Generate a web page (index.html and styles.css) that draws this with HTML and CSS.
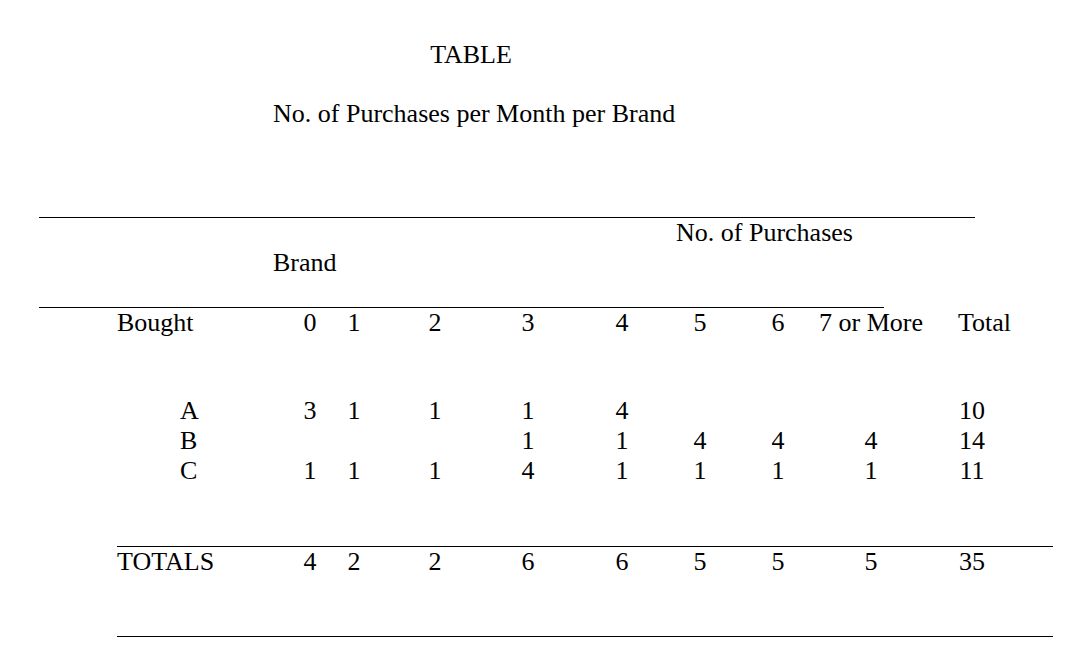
FILE: index.html
```html
<!DOCTYPE html>
<html lang="en">
<head>
<meta charset="utf-8">
<title>TABLE</title>
<link rel="stylesheet" href="styles.css">
</head>
<body>
<div class="page">
  <div class="title">TABLE</div>
  <div class="subtitle">No. of Purchases per Month per Brand</div>

  <div class="rule rule-top"></div>
  <div class="group-head">
    <div class="np">No. of Purchases</div>
    <div class="brand">Brand</div>
  </div>
  <div class="rule rule-mid"></div>

  <div class="row head-row">
    <div class="lbl">Bought</div>
    <div class="c">0</div>
    <div class="c">1</div>
    <div class="c">2</div>
    <div class="c">3</div>
    <div class="c">4</div>
    <div class="c">5</div>
    <div class="c">6</div>
    <div class="c">7 or More</div>
    <div class="c"><span class="total-hd">Total</span></div>
  </div>

  <div class="data">
    <div class="row">
      <div class="lbl brand-lbl">A</div>
      <div class="c">3</div>
      <div class="c">1</div>
      <div class="c">1</div>
      <div class="c">1</div>
      <div class="c">4</div>
      <div class="c"></div>
      <div class="c"></div>
      <div class="c"></div>
      <div class="c">10</div>
    </div>
    <div class="row">
      <div class="lbl brand-lbl">B</div>
      <div class="c"></div>
      <div class="c"></div>
      <div class="c"></div>
      <div class="c">1</div>
      <div class="c">1</div>
      <div class="c">4</div>
      <div class="c">4</div>
      <div class="c">4</div>
      <div class="c">14</div>
    </div>
    <div class="row">
      <div class="lbl brand-lbl">C</div>
      <div class="c">1</div>
      <div class="c">1</div>
      <div class="c">1</div>
      <div class="c">4</div>
      <div class="c">1</div>
      <div class="c">1</div>
      <div class="c">1</div>
      <div class="c">1</div>
      <div class="c">11</div>
    </div>
  </div>

  <div class="rule rule-low"></div>
  <div class="row totals-row">
    <div class="lbl">TOTALS</div>
    <div class="c">4</div>
    <div class="c">2</div>
    <div class="c">2</div>
    <div class="c">6</div>
    <div class="c">6</div>
    <div class="c">5</div>
    <div class="c">5</div>
    <div class="c">5</div>
    <div class="c">35</div>
  </div>
  <div class="rule rule-end"></div>
</div>
</body>
</html>
```

FILE: styles.css
```css
html, body {
  margin: 0;
  padding: 0;
  background: #ffffff;
}

body {
  font-family: "Liberation Serif", "Times New Roman", serif;
  font-size: 26px;
  line-height: 30px;
  color: #000000;
}

.page {
  padding-top: 40px;
}

.title {
  width: 942px;
  text-align: center;
}

.subtitle {
  margin-top: 29px;
  padding-left: 273px;
}

.rule {
  height: 0;
  border-top: 1px solid #000000;
}

.rule-top {
  margin-top: 88px;
  margin-left: 39px;
  width: 936px;
}

.group-head .np {
  padding-left: 676px;
}

.group-head .brand {
  padding-left: 273px;
}

.rule-mid {
  margin-top: 29px;
  margin-left: 39px;
  width: 845px;
}

.row {
  display: grid;
  grid-template-columns: 171px 44px 44px 118px 68px 120px 36px 120px 66px 136px;
  margin-left: 117px;
  white-space: nowrap;
}

.c {
  display: flex;
  justify-content: center;
}

.total-hd {
  padding-left: 25px;
}

.brand-lbl {
  padding-left: 63px;
}

.data {
  margin-top: 58px;
}

.rule-low {
  margin-top: 60px;
  margin-left: 117px;
  width: 936px;
}

.rule-end {
  margin-top: 59px;
  margin-left: 117px;
  width: 936px;
}
```
